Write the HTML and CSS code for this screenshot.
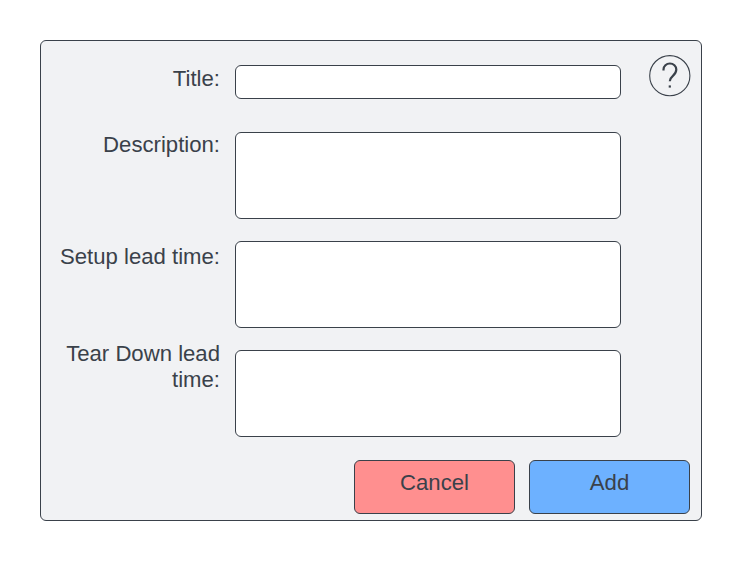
FILE: index.html
```html
<!DOCTYPE html>
<html lang="en">
<head>
<meta charset="utf-8">
<title>Add item</title>
<link rel="stylesheet" href="styles.css">
</head>
<body>
<form class="dialog">
  <div class="fields">
    <label class="label label-title" for="title">Title:</label>
    <input class="field field-title" id="title" type="text">
    <label class="label" for="description">Description:</label>
    <textarea class="field" id="description"></textarea>
    <label class="label label-setup" for="setup">Setup lead time:</label>
    <textarea class="field" id="setup"></textarea>
    <label class="label label-teardown" for="teardown">Tear Down lead time:</label>
    <textarea class="field" id="teardown"></textarea>
  </div>
  <button class="help" type="button" aria-label="Help">
    <svg width="42" height="42" viewBox="0 0 42 42" fill="none" stroke="#3a414a">
      <circle cx="20.8" cy="20.7" r="20.1" stroke-width="1.1"/>
      <path d="M14.5 15.6v-1a6.4 6.1 0 0 1 12.8 0c0 3-1.4 4.5-3.4 6.2-2.2 1.9-3.1 3-3.1 5.5" stroke-width="2.2"/>
      <path d="M20.8 30.4v2.2" stroke-width="2.2"/>
    </svg>
  </button>
  <div class="actions">
    <button class="button cancel" type="button">Cancel</button>
    <button class="button add" type="button">Add</button>
  </div>
</form>
</body>
</html>
```
FILE: styles.css
```css
* {
  box-sizing: border-box;
}

body {
  margin: 0;
  padding: 40px;
  background: #fff;
  color: #3a414a;
  font: 22.15px/26.67px "Liberation Sans", Arial, sans-serif;
}

.dialog {
  display: grid;
  grid-template-columns: 580px 41px;
  justify-content: space-between;
  align-content: start;
  width: 662px;
  height: 481px;
  padding: 14px 11px 0 0;
  background: #f1f2f4;
  border: 1px solid #3a414a;
  border-radius: 6px;
}

.fields {
  display: grid;
  grid-template-columns: 164px 386px;
  grid-template-rows: 45px 87px 87px 87px;
  gap: 22px 15px;
  padding: 10px 0 0 15px;
}

.label {
  text-align: right;
}

.label-title {
  margin-top: 1px;
}

.label-setup {
  margin-top: 3px;
}

.label-teardown {
  margin-top: -9.5px;
}

.field {
  display: block;
  width: 100%;
  height: 100%;
  margin: 0;
  padding: 4px 8px;
  background: #fff;
  border: 1px solid #3a414a;
  border-radius: 6px;
  font: inherit;
  color: inherit;
  resize: none;
  outline: none;
}

.field-title {
  height: 34px;
}

.help {
  width: 42px;
  height: 42px;
  padding: 0;
  background: none;
  border: 0;
}

.help svg {
  display: block;
}

.actions {
  grid-column: 1 / -1;
  display: flex;
  justify-content: flex-end;
  gap: 14px;
  margin-top: 23px;
}

.button {
  display: flex;
  justify-content: center;
  align-items: flex-start;
  width: 161px;
  height: 54px;
  padding: 9px 0 0;
  border: 1px solid #3a414a;
  border-radius: 6px;
  font: inherit;
  color: #3a414a;
}

.cancel {
  background: #ff8f8f;
}

.add {
  background: #6db1ff;
}
```
